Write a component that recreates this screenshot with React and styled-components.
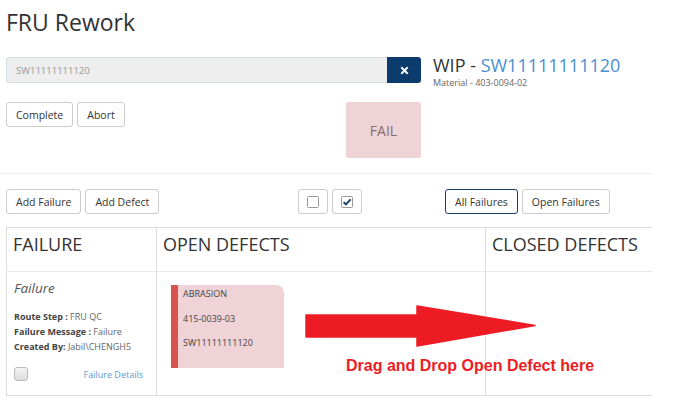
import React from "react";
import styled, { createGlobalStyle } from "styled-components";
import { FaTimes } from "react-icons/fa";

const GlobalStyle = createGlobalStyle`
  body {
    margin: 0;
    background: #ffffff;
    font-family: "Open Sans", "Noto Sans", sans-serif;
    color: #333333;
  }
`;

const Page = styled.div`
  width: 652px;
`;

const Title = styled.h1`
  margin: 0;
  padding: 7px 0 0 6px;
  font-size: 23px;
  line-height: 30px;
  font-weight: 400;
  color: #333333;
`;

const Head = styled.div`
  display: grid;
  grid-template-columns: 415px auto;
  column-gap: 12px;
  padding: 20px 0 0 6px;
`;

const LeftCol = styled.div`
  display: flex;
  flex-direction: column;
  gap: 19px;
`;

const InputGroup = styled.div`
  display: flex;
  height: 26px;
`;

const WipInput = styled.input`
  flex: 1;
  box-sizing: border-box;
  height: 26px;
  padding: 0 9px;
  border: 1px solid #d6dde4;
  border-right: none;
  border-radius: 3px 0 0 3px;
  background: #eeeeee;
  font-family: inherit;
  font-size: 9.5px;
  color: #999999;
  outline: none;
`;

const ClearButton = styled.div`
  width: 34px;
  display: flex;
  align-items: center;
  justify-content: center;
  background: #0b3c6d;
  color: #ffffff;
  border-radius: 0 3px 3px 0;
  font-size: 11px;
`;

const ActionRow = styled.div`
  display: flex;
  justify-content: space-between;
  align-items: flex-start;
`;

const ButtonGroup = styled.div`
  display: flex;
  gap: 4px;
`;

const Button = styled.div`
  box-sizing: border-box;
  height: 25px;
  padding: 0 ${(props) => (props.$pad ? props.$pad : 9)}px;
  display: flex;
  align-items: center;
  justify-content: center;
  border: 1px solid ${(props) => (props.$active ? "#1f3f66" : "#cccccc")};
  border-radius: 3px;
  background: #ffffff;
  font-size: 10.5px;
  color: #333333;
`;

const FailBox = styled.div`
  width: 75px;
  height: 56px;
  display: flex;
  align-items: center;
  justify-content: center;
  background: #efd4d7;
  border-radius: 2px;
  font-size: 14px;
  color: #8b6b6b;
`;

const WipInfo = styled.div`
  display: flex;
  flex-direction: column;
`;

const WipTitle = styled.div`
  font-size: 18px;
  line-height: 20px;
  margin-top: -2px;
  color: #333333;
  span {
    color: #4a8fd0;
  }
`;

const Material = styled.div`
  margin-top: 2px;
  font-size: 9px;
  line-height: 12px;
  color: #666666;
`;

const Divider = styled.div`
  height: 1px;
  background: #eeeeee;
  margin-top: 15px;
`;

const Toolbar = styled.div`
  display: grid;
  grid-template-columns: 292px 147px auto;
  padding: 15px 0 0 6px;
`;

const CheckIcon = styled.svg`
  width: 12px;
  height: 12px;
  display: block;
`;

const Table = styled.div`
  position: relative;
  margin: 13px 0 0 6px;
  display: grid;
  grid-template-columns: 150px 329px 167px;
  grid-template-rows: 44px 123px;
  border-top: 1px solid #dddddd;
  border-bottom: 1px solid #dddddd;
`;

const HeaderCell = styled.div`
  box-sizing: border-box;
  border-left: 1px solid #dddddd;
  border-bottom: 1px solid #e8e8e8;
  padding: 5px 6px 0;
  font-size: 18px;
  line-height: 22px;
  color: #333333;
`;

const Cell = styled.div`
  box-sizing: border-box;
  border-left: 1px solid #dddddd;
  padding: ${(props) => props.$pad || "0"};
`;

const FailureName = styled.div`
  font-style: italic;
  font-size: 13.5px;
  line-height: 18px;
  color: #555555;
`;

const InfoList = styled.div`
  margin-top: 12px;
  display: flex;
  flex-direction: column;
`;

const InfoLine = styled.div`
  font-size: 9px;
  line-height: 15px;
  color: #666666;
  b {
    color: #444444;
    font-weight: 700;
  }
`;

const FailureFoot = styled.div`
  margin-top: 13px;
  display: flex;
  align-items: center;
  justify-content: space-between;
  padding-right: 13px;
`;

const FakeCheck = styled.div`
  box-sizing: border-box;
  width: 14px;
  height: 14px;
  border: 1px solid #bbbbbb;
  border-radius: 3px;
  background: linear-gradient(#f4f4f4, #dddddd);
`;

const DetailsLink = styled.a`
  font-size: 9px;
  color: #5b9bd5;
  text-decoration: none;
`;

const DefectCard = styled.div`
  box-sizing: border-box;
  width: 113px;
  height: 83px;
  padding: 3px 0 0 5px;
  border-left: 7px solid #d9534f;
  border-top-right-radius: 8px;
  background: #efd3d6;
`;

const DefectLine = styled.div`
  font-size: 9px;
  line-height: 12px;
  margin-bottom: 12.5px;
  color: #444444;
`;

const DropHint = styled.div`
  position: absolute;
  left: 299px;
  top: 77px;
  display: flex;
  flex-direction: column;
  pointer-events: none;
`;

const HintText = styled.div`
  margin: 10px 0 0 41px;
  font-family: "Liberation Sans", Arial, sans-serif;
  font-weight: 700;
  font-size: 16px;
  line-height: 18px;
  color: #ed1c24;
  white-space: nowrap;
`;

const App = () => {
  return (
    <Page>
      <GlobalStyle />
      <Title>FRU Rework</Title>
      <Head>
        <LeftCol>
          <InputGroup>
            <WipInput value="SW11111111120" readOnly />
            <ClearButton>
              <FaTimes />
            </ClearButton>
          </InputGroup>
          <ActionRow>
            <ButtonGroup>
              <Button>Complete</Button>
              <Button>Abort</Button>
            </ButtonGroup>
            <FailBox>FAIL</FailBox>
          </ActionRow>
        </LeftCol>
        <WipInfo>
          <WipTitle>
            WIP - <span>SW11111111120</span>
          </WipTitle>
          <Material>Material - 403-0094-02</Material>
        </WipInfo>
      </Head>
      <Divider />
      <Toolbar>
        <ButtonGroup>
          <Button>Add Failure</Button>
          <Button>Add Defect</Button>
        </ButtonGroup>
        <ButtonGroup>
          <Button $pad={8}>
            <CheckIcon viewBox="0 0 12 12">
              <rect x="0.5" y="0.5" width="11" height="11" rx="1" fill="#fff" stroke="#999" />
            </CheckIcon>
          </Button>
          <Button $pad={8}>
            <CheckIcon viewBox="0 0 12 12">
              <rect x="0.5" y="0.5" width="11" height="11" rx="1" fill="#fff" stroke="#999" />
              <path d="M2.6 6.2 L5 8.4 L9.6 3.4" fill="none" stroke="#1f3f66" strokeWidth="2" />
            </CheckIcon>
          </Button>
        </ButtonGroup>
        <ButtonGroup>
          <Button $active>All Failures</Button>
          <Button>Open Failures</Button>
        </ButtonGroup>
      </Toolbar>
      <Table>
        <HeaderCell>FAILURE</HeaderCell>
        <HeaderCell>OPEN DEFECTS</HeaderCell>
        <HeaderCell>CLOSED DEFECTS</HeaderCell>
        <Cell $pad="7px 0 0 7px">
          <FailureName>Failure</FailureName>
          <InfoList>
            <InfoLine>
              <b>Route Step :</b> FRU QC
            </InfoLine>
            <InfoLine>
              <b>Failure Message :</b> Failure
            </InfoLine>
            <InfoLine>
              <b>Created By:</b> Jabil\CHENGH5
            </InfoLine>
          </InfoList>
          <FailureFoot>
            <FakeCheck />
            <DetailsLink href="#">Failure Details</DetailsLink>
          </FailureFoot>
        </Cell>
        <Cell $pad="13px 0 0 14px">
          <DefectCard>
            <DefectLine>ABRASION</DefectLine>
            <DefectLine>415-0039-03</DefectLine>
            <DefectLine>SW11111111120</DefectLine>
          </DefectCard>
        </Cell>
        <Cell />
        <DropHint>
          <svg width="232" height="42" viewBox="0 0 232 42">
            <path
              d="M1 10 L112 10 L112 1 L230 20.5 L112 41 L112 32 L1 32 Z"
              fill="#ed1c24"
              stroke="#ed1c24"
              strokeWidth="1.5"
              strokeLinejoin="round"
            />
          </svg>
          <HintText>Drag and Drop Open Defect here</HintText>
        </DropHint>
      </Table>
    </Page>
  );
};

export default App;
